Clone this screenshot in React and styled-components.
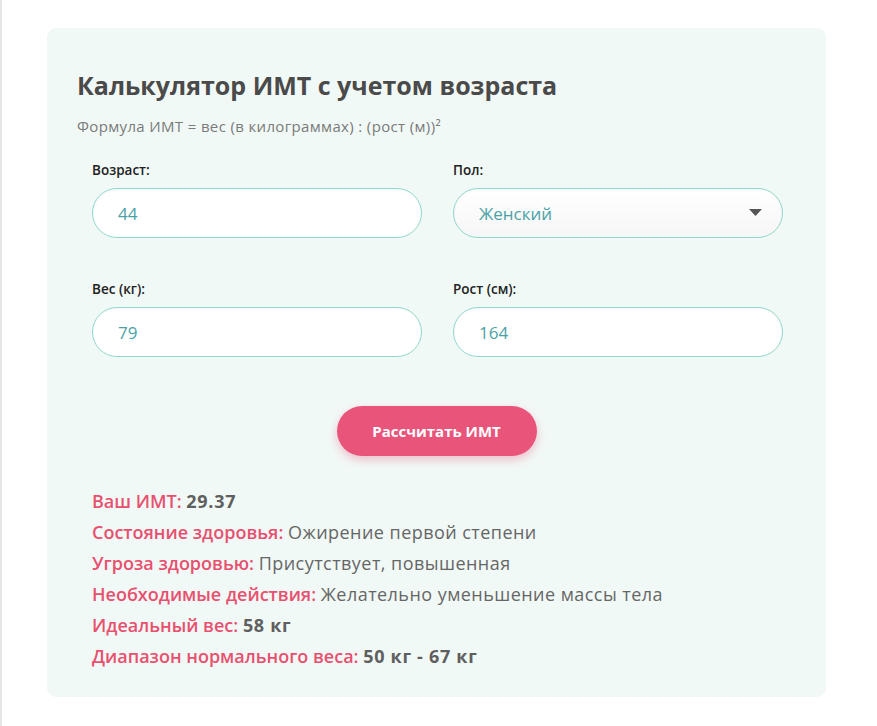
import React, { useState } from 'react';
import styled, { createGlobalStyle } from 'styled-components';

const GlobalStyle = createGlobalStyle`
  html, body {
    margin: 0;
    padding: 0;
    background: #ffffff;
  }
  body {
    font-family: "Open Sans", "Liberation Sans", sans-serif;
    border-left: 2px solid #e6e6e6;
    min-height: 726px;
    box-sizing: border-box;
  }
`;

const Page = styled.div`
  padding: 28px 0 30px 45px;
`;

const Card = styled.section`
  width: 779px;
  box-sizing: border-box;
  background: #f1f9f6;
  border-radius: 9px;
  padding: 40px 30px 25px 30px;
`;

const Title = styled.h2`
  margin: 0;
  font-family: "Open Sans", "Liberation Sans", sans-serif;
  font-weight: 700;
  font-size: 25px;
  line-height: 34px;
  color: #4a4a4a;
`;

const Formula = styled.p`
  margin: 14px 0 0 0;
  font-family: "Open Sans", "Liberation Sans", sans-serif;
  font-size: 15px;
  line-height: 20px;
  letter-spacing: 0.35px;
  color: #7a7a7a;
`;

const Form = styled.div`
  display: grid;
  grid-template-columns: 330px 330px;
  column-gap: 31px;
  row-gap: 42px;
  padding: 0 15px;
  margin-top: 25px;
`;

const Field = styled.label`
  display: flex;
  flex-direction: column;
  gap: 9px;
`;

const Label = styled.span`
  font-family: "Open Sans", "Liberation Sans", sans-serif;
  font-weight: 600;
  font-size: 13.5px;
  line-height: 18px;
  color: #222;
`;

const Input = styled.input`
  box-sizing: border-box;
  width: 100%;
  height: 50px;
  border: 1px solid #8fd8cc;
  border-radius: 25px;
  padding: 0 25px;
  font-family: "Open Sans", "Liberation Sans", sans-serif;
  font-size: 17px;
  color: #4aa2a6;
  background: ${p => (p.$select ? 'linear-gradient(#ffffff, #f6f6f6)' : '#ffffff')};
  box-shadow: inset 0 1px 3px rgba(0, 0, 0, 0.04);
  outline: none;
`;

const SelectWrap = styled.div`
  position: relative;
`;

const Select = styled(Input).attrs({ as: 'select' })`
  appearance: none;
  -webkit-appearance: none;
`;

const Caret = styled.svg`
  position: absolute;
  right: 21px;
  top: 21px;
  pointer-events: none;
`;

const ButtonRow = styled.div`
  display: flex;
  justify-content: center;
  margin-top: 49px;
`;

const Button = styled.button`
  width: 200px;
  height: 50px;
  border: none;
  border-radius: 25px;
  background: #e9547a;
  color: #fff;
  font-family: "Open Sans", "Liberation Sans", sans-serif;
  font-weight: 700;
  font-size: 15px;
  box-shadow: 0 4px 10px rgba(233, 84, 122, 0.35);
  cursor: pointer;
`;

const Results = styled.div`
  margin-top: 30px;
  padding-left: 15px;
  display: flex;
  flex-direction: column;
`;

const Line = styled.div`
  font-family: "Open Sans", "Liberation Sans", sans-serif;
  font-size: 18px;
  line-height: 31px;
  color: #666;
`;

const Key = styled.span`
  color: #e8506f;
  font-weight: 600;
`;

const Value = styled.span`
  font-weight: ${p => (p.$bold ? 700 : 400)};
  letter-spacing: ${p => (p.$bold ? '0.7px' : '0.45px')};
  color: ${p => (p.$bold ? '#5f5f5f' : '#666')};
`;

const results = [
  { k: 'Ваш ИМТ:', v: '29.37', bold: true },
  { k: 'Состояние здоровья:', v: 'Ожирение первой степени' },
  { k: 'Угроза здоровью:', v: 'Присутствует, повышенная' },
  { k: 'Необходимые действия:', v: 'Желательно уменьшение массы тела' },
  { k: 'Идеальный вес:', v: '58 кг', bold: true },
  { k: 'Диапазон нормального веса:', v: '50 кг - 67 кг', bold: true },
];

export default function App() {
  const [age, setAge] = useState('44');
  const [sex, setSex] = useState('f');
  const [weight, setWeight] = useState('79');
  const [height, setHeight] = useState('164');

  return (
    <>
      <GlobalStyle />
      <Page>
        <Card>
          <Title>Калькулятор ИМТ с учетом возраста</Title>
          <Formula>Формула ИМТ = вес (в килограммах) : (рост (м))²</Formula>
          <Form>
            <Field>
              <Label>Возраст:</Label>
              <Input value={age} onChange={e => setAge(e.target.value)} />
            </Field>
            <Field>
              <Label>Пол:</Label>
              <SelectWrap>
                <Select $select value={sex} onChange={e => setSex(e.target.value)}>
                  <option value="f">Женский</option>
                  <option value="m">Мужской</option>
                </Select>
                <Caret width="13" height="7" viewBox="0 0 13 7">
                  <path d="M0 0 H13 L6.5 7 Z" fill="#555" />
                </Caret>
              </SelectWrap>
            </Field>
            <Field>
              <Label>Вес (кг):</Label>
              <Input value={weight} onChange={e => setWeight(e.target.value)} />
            </Field>
            <Field>
              <Label>Рост (см):</Label>
              <Input value={height} onChange={e => setHeight(e.target.value)} />
            </Field>
          </Form>
          <ButtonRow>
            <Button>Рассчитать ИМТ</Button>
          </ButtonRow>
          <Results>
            {results.map(r => (
              <Line key={r.k}>
                <Key>{r.k}</Key> <Value $bold={r.bold}>{r.v}</Value>
              </Line>
            ))}
          </Results>
        </Card>
      </Page>
    </>
  );
}
